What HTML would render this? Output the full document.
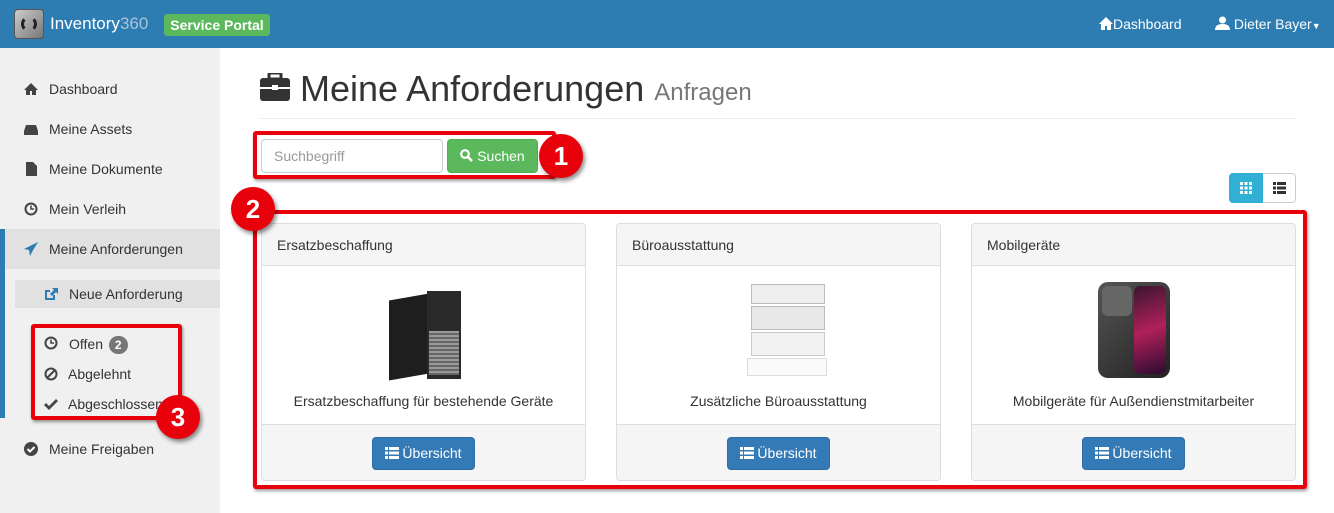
<!DOCTYPE html>
<html><head><meta charset="utf-8"><style>
*{box-sizing:border-box;margin:0;padding:0}
body{width:1334px;height:513px;overflow:hidden;font-family:"Liberation Sans",sans-serif;background:#fff;position:relative;color:#333}
.abs{position:absolute}
.nav{left:0;top:0;width:1334px;height:48px;background:#2d7db3}
.side{left:0;top:48px;width:220px;height:465px;background:#f0f0f0}
.si{position:absolute;left:49px;font-size:14px;color:#333}
.ic{position:absolute;left:24px;width:14px;height:14px}
.panel{position:absolute;top:223px;width:325px;height:258px;border:1px solid #ddd;border-radius:4px;background:#fff;overflow:hidden}
.ph{height:42px;background:#f5f5f5;border-bottom:1px solid #ddd;padding:13px 15px;font-size:14px}
.pf{position:absolute;left:0;bottom:0;width:100%;height:56px;background:#f5f5f5;border-top:1px solid #ddd}
.btn{position:absolute;top:12px;left:110px;width:103px;height:33px;background:#337ab7;border:1px solid #2e6da4;border-radius:4px;color:#fff;font-size:14px;line-height:31px;text-align:center}
.btn svg{vertical-align:-1px;margin-right:3px}
.pt{position:absolute;top:169px;width:100%;text-align:center;font-size:14px}
.red{position:absolute;border:4px solid #e8000b;border-radius:3px;box-shadow:1px 2px 3px rgba(0,0,0,.4)}
.num{position:absolute;width:44px;height:44px;border-radius:50%;background:#e8000b;color:#fff;font-weight:bold;font-size:26px;text-align:center;line-height:44px;box-shadow:2px 3px 4px rgba(0,0,0,.45)}
</style></head><body>
<div class="abs nav"></div>
<div class="abs" style="left:14px;top:9px;width:30px;height:30px;border-radius:4px;background:linear-gradient(135deg,#ccc,#777);border:1px solid #555"><div style="position:absolute;left:6px;top:6px;width:16px;height:16px;border:3px solid #222;border-radius:50%;border-top-color:transparent;border-bottom-color:transparent"></div></div>
<div class="abs" style="left:50px;top:14px;font-size:17px;color:#fff">Inventory<span style="color:#a9c4d8">360</span></div>
<div class="abs" style="left:164px;top:14px;width:106px;height:22px;background:#5cb85c;border-radius:3px;color:#fff;font-weight:bold;font-size:14px;line-height:22px;text-align:center">Service Portal</div>
<div class="abs" style="left:1099px;top:16px;color:#fff;font-size:14px"><svg width="14" height="13" viewBox="0 0 14 13" style="vertical-align:-1px"><path d="M7 0 0 7h2v6h4V9h2v4h4V7h2z" fill="#fff"/></svg>Dashboard</div>
<div class="abs" style="left:1215px;top:16px;color:#fff;font-size:14px"><svg width="15" height="14" viewBox="0 0 15 14" style="vertical-align:-1px"><circle cx="7.5" cy="4" r="3.5" fill="#fff"/><path d="M0 14c0-5 4-6 7.5-6S15 9 15 14z" fill="#fff"/></svg> Dieter Bayer<span style="font-size:9px">▼</span></div>

<div class="abs side"></div>
<div class="abs" style="left:0;top:229px;width:220px;height:40px;background:#e1e1e1"></div>
<div class="abs" style="left:15px;top:280px;width:205px;height:28px;background:#e1e1e1"></div>
<div class="abs" style="left:0;top:229px;width:5px;height:189px;background:#2d7db3"></div>
<svg class="ic" style="top:82px" viewBox="0 0 14 14"><path d="M7 1 0 8h2v5h4V9h2v4h4V8h2z" fill="#444"/></svg><div class="si" style="top:81px">Dashboard</div>
<svg class="ic" style="top:122px" viewBox="0 0 14 14"><path d="M2 3h10l2 6v4H0V9z" fill="#444"/></svg><div class="si" style="top:121px">Meine Assets</div>
<svg class="ic" style="top:162px" viewBox="0 0 14 14"><path d="M2 0h7l4 4v10H2z" fill="#444"/></svg><div class="si" style="top:161px">Meine Dokumente</div>
<svg class="ic" style="top:202px" viewBox="0 0 14 14"><circle cx="7" cy="7" r="5.5" fill="none" stroke="#444" stroke-width="2"/><path d="M7 3.5V7h3" stroke="#444" stroke-width="1.5" fill="none"/></svg><div class="si" style="top:201px">Mein Verleih</div>
<svg class="ic" style="top:242px" viewBox="0 0 14 14"><path d="M14 0 0 7l5 1 1 6 2-4z" fill="#2d7db3"/></svg><div class="si" style="top:241px">Meine Anforderungen</div>
<svg class="ic" style="left:44px;top:287px" viewBox="0 0 14 14"><path d="M8 1h6v6l-2-2-4 4-2-2 4-4zM1 3h5v2H3v6h6V8h2v5H1z" fill="#2d7db3"/></svg><div class="si" style="left:69px;top:286px">Neue Anforderung</div>
<svg class="ic" style="left:44px;top:336px" viewBox="0 0 14 14"><circle cx="7" cy="7" r="5.5" fill="none" stroke="#444" stroke-width="2"/><path d="M7 3.5V7h3" stroke="#444" stroke-width="1.5" fill="none"/></svg><div class="si" style="left:69px;top:336px">Offen <span style="display:inline-block;background:#777;color:#fff;font-weight:bold;font-size:12px;border-radius:10px;padding:2px 6px;margin-left:2px">2</span></div>
<svg class="ic" style="left:44px;top:367px" viewBox="0 0 14 14"><circle cx="7" cy="7" r="5.5" fill="none" stroke="#444" stroke-width="2"/><path d="M3 11 11 3" stroke="#444" stroke-width="2"/></svg><div class="si" style="left:68px;top:366px">Abgelehnt</div>
<svg class="ic" style="left:44px;top:397px" viewBox="0 0 14 14"><path d="M0 8l2-2 3 3 7-7 2 2-9 9z" fill="#444"/></svg><div class="si" style="left:68px;top:396px">Abgeschlossen</div>
<svg class="ic" style="top:442px" viewBox="0 0 14 14"><circle cx="7" cy="7" r="7" fill="#444"/><path d="M3.5 7l2.5 2.5 4.5-4.5" stroke="#fff" stroke-width="2" fill="none"/></svg><div class="si" style="top:441px">Meine Freigaben</div>

<svg class="abs" style="left:260px;top:73px" width="30" height="28" viewBox="0 0 30 28"><rect x="9" y="0" width="12" height="6" rx="1" fill="none" stroke="#333" stroke-width="3"/><rect x="0" y="5" width="30" height="23" rx="3" fill="#333"/><rect x="0" y="14" width="30" height="2" fill="#fff"/><rect x="12" y="12" width="6" height="5" fill="#fff"/></svg>
<div class="abs" style="left:300px;top:68px;font-size:36px;color:#333">Meine Anforderungen <span style="font-size:24px;color:#777;position:relative;top:-1px">Anfragen</span></div>
<div class="abs" style="left:260px;top:118px;width:1036px;height:1px;background:#eee"></div>

<div class="abs" style="left:261px;top:139px;width:182px;height:34px;border:1px solid #ccc;border-radius:4px;padding:8px 12px;font-size:14px;color:#999">Suchbegriff</div>
<div class="abs" style="left:447px;top:139px;width:91px;height:34px;background:#5cb85c;border:1px solid #4cae4c;border-radius:4px;color:#fff;font-size:14px;line-height:32px;text-align:center"><svg width="13" height="13" viewBox="0 0 13 13" style="vertical-align:-1px"><circle cx="5" cy="5" r="3.8" fill="none" stroke="#fff" stroke-width="2.2"/><path d="M8 8l4 4" stroke="#fff" stroke-width="2.6"/></svg> Suchen</div>

<div class="abs" style="left:1229px;top:173px;width:34px;height:30px;background:#31b0d5;border-radius:4px 0 0 4px"></div>
<div class="abs" style="left:1263px;top:173px;width:33px;height:30px;border:1px solid #ccc;border-left:none;border-radius:0 4px 4px 0"></div>
<svg class="abs" style="left:1240px;top:182px" width="12" height="12" viewBox="0 0 12 12" fill="#fff"><rect x="0" y="0" width="3" height="3"/><rect x="4.5" y="0" width="3" height="3"/><rect x="9" y="0" width="3" height="3"/><rect x="0" y="4.5" width="3" height="3"/><rect x="4.5" y="4.5" width="3" height="3"/><rect x="9" y="4.5" width="3" height="3"/><rect x="0" y="9" width="3" height="3"/><rect x="4.5" y="9" width="3" height="3"/><rect x="9" y="9" width="3" height="3"/></svg>
<svg class="abs" style="left:1273px;top:182px" width="13" height="12" viewBox="0 0 13 12" fill="#333"><rect x="0" y="0" width="3" height="3"/><rect x="4" y="0" width="9" height="3"/><rect x="0" y="4.5" width="3" height="3"/><rect x="4" y="4.5" width="9" height="3"/><rect x="0" y="9" width="3" height="3"/><rect x="4" y="9" width="9" height="3"/></svg>

<div class="panel" style="left:261px"><div class="ph">Ersatzbeschaffung</div>
<div class="abs" style="left:127px;top:65px;width:72px;height:90px"><div style="position:absolute;left:0;top:8px;width:40px;height:80px;background:#1e1e1e;transform:skewY(-10deg)"></div><div style="position:absolute;left:38px;top:2px;width:34px;height:88px;background:#2a2a2a"></div><div style="position:absolute;left:40px;top:42px;width:30px;height:44px;background:repeating-linear-gradient(#999 0 2px,#666 2px 4px)"></div></div>
<div class="pt">Ersatzbeschaffung für bestehende Geräte</div>
<div class="pf"><div class="btn"><svg width="14" height="12" viewBox="0 0 14 12" fill="#fff"><rect x="0" y="0" width="3" height="3"/><rect x="4" y="0" width="10" height="3"/><rect x="0" y="4.5" width="3" height="3"/><rect x="4" y="4.5" width="10" height="3"/><rect x="0" y="9" width="3" height="3"/><rect x="4" y="9" width="10" height="3"/></svg>Übersicht</div></div></div>

<div class="panel" style="left:616px"><div class="ph">Büroausstattung</div>
<div class="abs" style="left:134px;top:60px;width:76px;height:95px"><div style="position:absolute;left:0;top:0;width:74px;height:20px;background:#eee;border:1px solid #bbb"></div><div style="position:absolute;left:0;top:22px;width:74px;height:24px;background:#e8e8e8;border:1px solid #bbb"></div><div style="position:absolute;left:0;top:48px;width:74px;height:24px;background:#f2f2f2;border:1px solid #ccc"></div><div style="position:absolute;left:-4px;top:74px;width:80px;height:18px;background:#fafafa;border:1px solid #ddd"></div></div>
<div class="pt">Zusätzliche Büroausstattung</div>
<div class="pf"><div class="btn"><svg width="14" height="12" viewBox="0 0 14 12" fill="#fff"><rect x="0" y="0" width="3" height="3"/><rect x="4" y="0" width="10" height="3"/><rect x="0" y="4.5" width="3" height="3"/><rect x="4" y="4.5" width="10" height="3"/><rect x="0" y="9" width="3" height="3"/><rect x="4" y="9" width="10" height="3"/></svg>Übersicht</div></div></div>

<div class="panel" style="left:971px"><div class="ph">Mobilgeräte</div>
<div class="abs" style="left:126px;top:58px;width:72px;height:96px;border-radius:10px;background:linear-gradient(135deg,#555,#222)"><div style="position:absolute;left:36px;top:4px;width:32px;height:88px;border-radius:6px;background:linear-gradient(160deg,#3a1630,#b0205a 50%,#2a0c30)"></div><div style="position:absolute;left:4px;top:4px;width:30px;height:30px;border-radius:6px;background:#666"></div></div>
<div class="pt">Mobilgeräte für Außendienstmitarbeiter</div>
<div class="pf"><div class="btn"><svg width="14" height="12" viewBox="0 0 14 12" fill="#fff"><rect x="0" y="0" width="3" height="3"/><rect x="4" y="0" width="10" height="3"/><rect x="0" y="4.5" width="3" height="3"/><rect x="4" y="4.5" width="10" height="3"/><rect x="0" y="9" width="3" height="3"/><rect x="4" y="9" width="10" height="3"/></svg>Übersicht</div></div></div>

<div class="red" style="left:253px;top:131px;width:303px;height:48px"></div>
<div class="num" style="left:539px;top:134px">1</div>
<div class="red" style="left:253px;top:210px;width:1054px;height:279px"></div>
<div class="num" style="left:231px;top:187px">2</div>
<div class="red" style="left:31px;top:324px;width:151px;height:96px"></div>
<div class="num" style="left:156px;top:395px">3</div>
</body></html>
